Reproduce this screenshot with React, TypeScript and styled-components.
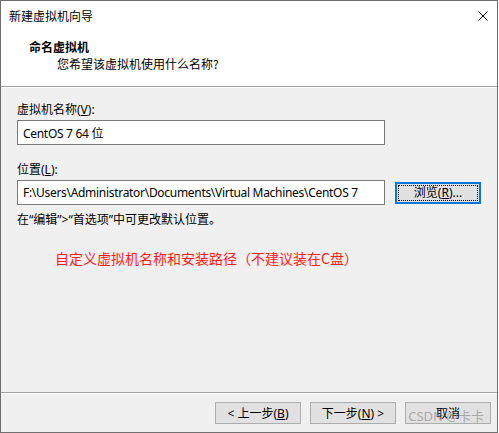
import React from 'react';
import styled, { createGlobalStyle } from 'styled-components';

const GlobalStyle = createGlobalStyle`
  html, body {
    margin: 0;
    padding: 0;
    background: #ffffff;
  }
  * {
    box-sizing: border-box;
  }
`;

const Window = styled.div`
  width: 498px;
  height: 433px;
  border: 1px solid #6f6f6f;
  display: flex;
  flex-direction: column;
  background: #f0f0f0;
  font-family: 'Noto Sans', 'Noto Sans CJK SC', sans-serif;
  font-size: 12px;
  color: #000;
`;

const TitleBar = styled.div`
  height: 29px;
  background: #ffffff;
  display: flex;
  align-items: center;
  justify-content: space-between;
  padding: 0 8px 0 8px;
`;

const TitleText = styled.span`
  font-family: 'Noto Sans CJK SC', sans-serif;
  font-size: 12px;
  line-height: 17px;
`;

const CloseIcon = styled.svg`
  width: 10px;
  height: 10px;
  margin-right: 1px;
`;

const Header = styled.div`
  height: 57px;
  background: #ffffff;
  padding: 8px 0 0 28px;
  border-bottom: 1px solid #a0a0a0;
  box-shadow: 0 1px 0 #ffffff;
`;

const HeaderTitle = styled.div`
  font-family: 'Noto Sans CJK SC', sans-serif;
  font-weight: 700;
  line-height: 17px;
`;

const HeaderSub = styled.div`
  font-family: 'Noto Sans CJK SC', sans-serif;
  line-height: 17px;
  padding-left: 28px;
`;

const Body = styled.div`
  flex: 1;
  padding: 14px 16px 0 16px;
  display: flex;
  flex-direction: column;
`;

const Label = styled.div<{ $gap?: number }>`
  line-height: 17px;
  margin-top: ${(p) => p.$gap ?? 0}px;
  margin-bottom: 2px;
`;

const Row = styled.div`
  display: flex;
  align-items: center;
`;

const TextBox = styled.div`
  width: 368px;
  height: 25px;
  background: #ffffff;
  border: 1px solid #7a7a7a;
  padding-left: 5px;
  display: flex;
  align-items: center;
  white-space: nowrap;
  overflow: hidden;
  letter-spacing: -0.3px;
`;

const Button = styled.div<{ $focused?: boolean }>`
  position: relative;
  width: 86px;
  height: 22px;
  background: #e1e1e1;
  border: 1px solid ${(p) => (p.$focused ? '#0078d7' : '#adadad')};
  box-shadow: ${(p) => (p.$focused ? 'inset 0 0 0 1px #0078d7' : 'none')};
  display: flex;
  align-items: center;
  justify-content: center;
  line-height: 17px;

  &::after {
    content: '';
    display: ${(p) => (p.$focused ? 'block' : 'none')};
    position: absolute;
    inset: 2px;
    border: 1px dotted #000;
  }
`;

const BrowseButton = styled(Button)`
  margin-left: 10px;
`;

const Hint = styled.div`
  line-height: 17px;
  margin-top: 6px;
`;

const Note = styled.div`
  font-family: 'Noto Sans CJK SC', sans-serif;
  font-size: 14px;
  line-height: 20px;
  color: #ff1a1a;
  margin: 20px 0 0 38px;
`;

const Footer = styled.div`
  position: relative;
  height: 40px;
  border-top: 1px solid #a0a0a0;
  box-shadow: inset 0 1px 0 #ffffff;
  display: flex;
  justify-content: flex-end;
  gap: 9px;
  padding: 9px 6px 0 0;
`;

const Watermark = styled.span`
  position: absolute;
  right: 13px;
  top: 15px;
  font-size: 13px;
  line-height: 17px;
  color: rgba(150, 150, 150, 0.75);
  pointer-events: none;
`;

const App: React.FC = () => {
  return (
    <>
      <GlobalStyle />
      <Window>
        <TitleBar>
          <TitleText>新建虚拟机向导</TitleText>
          <CloseIcon viewBox="0 0 10 10">
            <path d="M0.5 0.5 L9.5 9.5 M9.5 0.5 L0.5 9.5" stroke="#000" strokeWidth="1" />
          </CloseIcon>
        </TitleBar>
        <Header>
          <HeaderTitle>命名虚拟机</HeaderTitle>
          <HeaderSub>您希望该虚拟机使用什么名称?</HeaderSub>
        </Header>
        <Body>
          <Label>
            虚拟机名称(<u>V</u>):
          </Label>
          <TextBox>CentOS 7 64 位</TextBox>
          <Label $gap={16}>
            位置(<u>L</u>):
          </Label>
          <Row>
            <TextBox>F:\Users\Administrator\Documents\Virtual Machines\CentOS 7</TextBox>
            <BrowseButton $focused>
              浏览(<u>R</u>)...
            </BrowseButton>
          </Row>
          <Hint>在“编辑”&gt;“首选项”中可更改默认位置。</Hint>
          <Note>自定义虚拟机名称和安装路径（不建议装在C盘）</Note>
        </Body>
        <Footer>
          <Button>
            &lt; 上一步(<u>B</u>)
          </Button>
          <Button>
            下一步(<u>N</u>) &gt;
          </Button>
          <Button>取消</Button>
          <Watermark>CSDN @卡卡</Watermark>
        </Footer>
      </Window>
    </>
  );
};

export default App;
